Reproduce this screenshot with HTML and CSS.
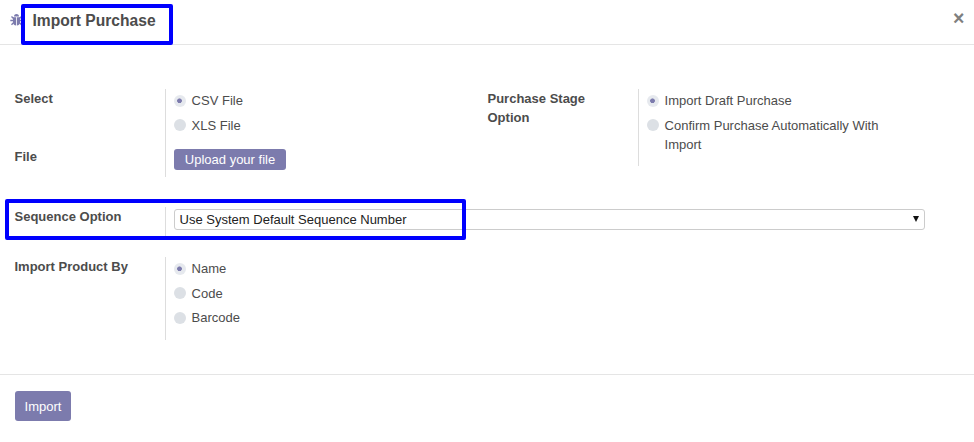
FILE: index.html
```html
<!DOCTYPE html>
<html lang="en">
<head>
<meta charset="utf-8">
<title>Import Purchase</title>
<link rel="stylesheet" href="styles.css">
</head>
<body>
<header class="head">
  <svg class="bug" viewBox="0 0 13 14"><path class="shell" d="M4 3.500a2.500 2.500 0 0 1 5 0zM3 4.300h3.100v8.200C4.200 12.400 3 11 3 9zM6.900 4.300h3.100V9c0 2-1.200 3.400-3.100 3.500z"/><path class="legs" d="M1.500 3.400l2 2M.3 7.500H3M1.500 11.800l2.200-2.200M11.500 3.400l-2 2M12.700 7.500H10M11.500 11.800L9.300 9.600"/></svg>
  <h4 class="title">Import Purchase</h4>
  <button class="close" aria-label="Close">×</button>
  <div class="mark mark-title"></div>
</header>
<main class="body">
  <div class="columns">
    <section class="group">
      <div class="row csv"><label class="label">Select</label><div class="field"><div class="radio on"><i></i>CSV File</div><div class="radio"><i></i>XLS File</div></div></div>
      <div class="row file"><label class="label">File</label><div class="field"><button class="upload">Upload your file</button></div></div>
    </section>
    <section class="group">
      <div class="row stage"><label class="label">Purchase Stage Option</label><div class="field"><div class="radio on"><i></i>Import Draft Purchase</div><div class="radio"><i></i><span>Confirm Purchase Automatically With Import</span></div></div></div>
    </section>
  </div>
  <div class="row sequence"><label class="label">Sequence Option</label><div class="field"><div class="select">Use System Default Sequence Number<svg class="arrow" viewBox="0 0 6 6"><path d="M0 0h6L3 6z"/></svg></div></div><div class="mark mark-sequence"></div></div>
  <div class="row product"><label class="label">Import Product By</label><div class="field"><div class="radio on"><i></i>Name</div><div class="radio"><i></i>Code</div><div class="radio"><i></i>Barcode</div></div></div>
</main>
<footer class="foot"><button class="import">Import</button></footer>
</body>
</html>
```
FILE: styles.css
```css
* { box-sizing: border-box; }
body { margin: 0; height: 442px; overflow: hidden; background: #fff; color: #4c4c4c; font: 13px/19px "Liberation Sans", Arial, sans-serif; }
button { font: inherit; border: 0; margin: 0; }
.head { position: relative; height: 45px; display: flex; align-items: flex-start; border-bottom: 1px solid #e5e5e5; padding: 10px 9.500px 0 10px; }
.bug { width: 13px; height: 14px; margin-top: 3px; }
.shell { fill: #7c7bad; }
.legs { fill: none; stroke: #7c7bad; stroke-width: 1.400; }
.title { margin: 0 0 0 9.500px; font-size: 15.600px; line-height: 21px; }
.close { margin-left: auto; padding: 0; background: none; color: #7f7f7f; font-size: 19.500px; line-height: 16px; font-weight: bold; }
.mark { position: absolute; border: 4px solid #0000fe; border-radius: 2px; }
.mark-title { left: 21px; top: 4px; width: 152px; height: 41px; }
.body { height: 329px; padding: 44px 0 0 14.500px; }
.columns { display: flex; height: 118px; }
.group { width: 473px; }
.row { display: flex; }
.label { width: 150.500px; padding-right: 20px; font-weight: bold; }
.field { flex: 1; border-left: 1px solid #ddd; padding-left: 8px; }
.csv { height: 58px; }
.file { height: 30px; }
.stage { height: 77px; }
.stage .field { padding-right: 60px; }
.radio { display: flex; margin: 2px 0 5.500px; }
.radio i { flex: none; width: 12px; height: 12px; border-radius: 50%; background: #dce0e5; margin: 3.400px 5.600px 0 0; }
.radio:nth-child(3) i { margin-top: 4px; }
.radio.on i { margin-top: 4px; background: radial-gradient(circle at 5.500px 5.800px, #7c7bad 0 2px, #e6e9ee 2.700px); }
.upload { display: block; width: 112px; height: 21px; margin-top: 2px; padding: 0; border-radius: 3px; background: #7c7bad; color: #fff; }
.sequence { position: relative; height: 30px; }
.select { position: relative; width: 751px; height: 21px; margin-top: 2px; padding-left: 4.600px; border: 1px solid #ccc; border-radius: 3px; color: #222; }
.arrow { position: absolute; right: 5px; top: 6px; width: 6px; height: 6px; fill: #111; }
.mark-sequence { left: -9.500px; top: -8px; width: 461px; height: 41px; }
.product { height: 83px; margin-top: 20px; }
.foot { height: 68px; padding: 16px 15px; border-top: 1px solid #e5e5e5; }
.import { width: 56px; height: 30px; padding: 0; border-radius: 3px; background: #7c7bad; color: #fff; }
```
